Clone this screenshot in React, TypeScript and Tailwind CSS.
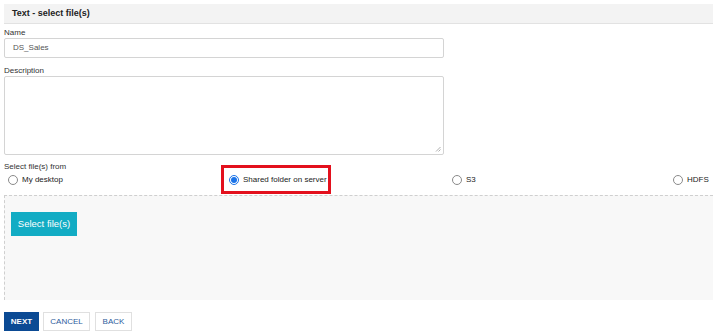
import React from "react";

function Radio({ label, checked }: { label: string; checked?: boolean }) {
    return <div className="flex items-center gap-[4px]">
        {checked
            ? <span className="w-[10px] h-[10px] rounded-full border border-[#1a73e8] flex items-center justify-center bg-white">
                <span className="w-[6px] h-[6px] rounded-full bg-[#1a73e8]" />
            </span>
            : <span className="w-[10px] h-[10px] rounded-full border border-[#8a8a8a] bg-white" />}
        <span className="text-[8px] leading-[10px] text-[#222]">{label}</span>
    </div>
}

export default function App() {
    return <div className="font-['Liberation_Sans',Arial,sans-serif] w-[715px] h-[336px] bg-white pl-1 pt-1 pr-[2px] overflow-hidden">
        <div className="h-5 bg-[#f3f3f3] border-b border-[#e2e2e2] flex items-center pl-2 text-[9px] font-bold text-[#222]">
            Text - select file(s)
        </div>

        <div className="mt-[3px] text-[8px] leading-[11px] text-[#333]">Name</div>
        <div className="w-[440px] h-5 border border-[#d4d4d4] rounded-[2px] flex items-center pl-2 text-[8px] text-[#555]">
            DS_Sales
        </div>

        <div className="mt-[7px] text-[8px] leading-[11px] text-[#333]">Description</div>
        <div className="relative w-[440px] h-[79px] border border-[#d4d4d4] rounded-[2px]">
            <svg className="absolute right-[2px] bottom-[2px]" width="6" height="6" viewBox="0 0 6 6">
                <path d="M1 5.5 L5.5 1 M3.5 5.5 L5.5 3.5" stroke="#999" strokeWidth="0.8" />
            </svg>
        </div>

        <div className="mt-[6px] text-[8px] leading-[11px] text-[#333]">Select file(s) from</div>
        <div className="grid grid-cols-[221px_223px_221px_auto] h-4 items-center pl-1">
            <Radio label="My desktop" />
            <div className="relative">
                <Radio label="Shared folder on server" checked />
                <div className="absolute left-[-8px] top-[-10px] w-[110px] h-[29px] border-[3px] border-[#e3101d]" />
            </div>
            <Radio label="S3" />
            <Radio label="HDFS" />
        </div>

        <div className="mt-[7px] h-[105px] bg-[#f8f8f8] border-t border-l border-dashed border-[#cfcfcf] pl-[6px] pt-4">
            <div className="w-[66px] h-6 bg-[#12acc4] flex items-center justify-center text-[9.5px] text-white">
                Select file(s)
            </div>
        </div>

        <div className="mt-3 flex gap-1">
            <div className="w-[35px] h-[19px] bg-[#0b4a94] flex items-center justify-center text-[8px] font-bold text-white">NEXT</div>
            <div className="w-[47px] h-[19px] border border-[#e0e0e0] flex items-center justify-center text-[8px] text-[#2d5c9c]">CANCEL</div>
            <div className="ml-[1px] w-[37px] h-[19px] border border-[#e0e0e0] flex items-center justify-center text-[8px] text-[#2d5c9c]">BACK</div>
        </div>
    </div>
}
